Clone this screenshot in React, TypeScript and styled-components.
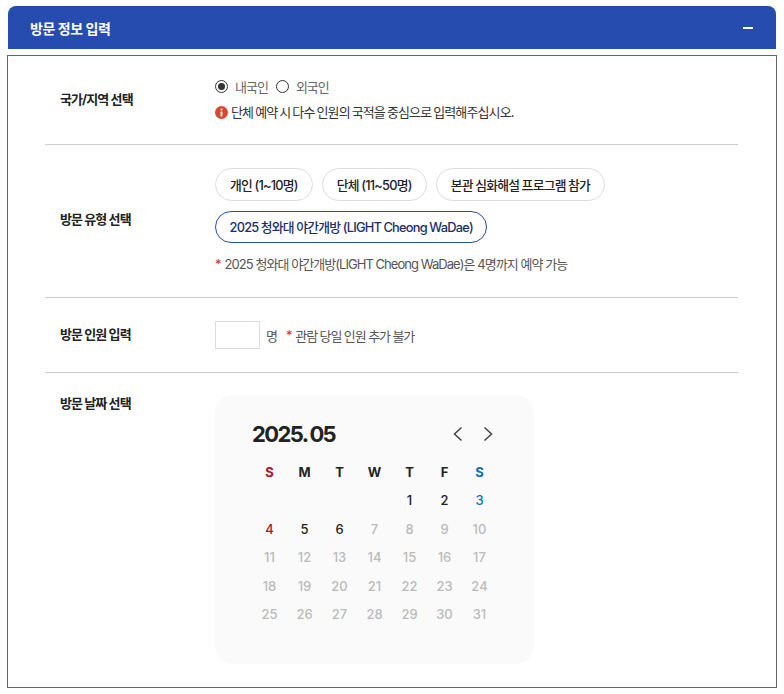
import React from "react";
import styled, { createGlobalStyle } from "styled-components";

const Global = createGlobalStyle`
  html, body { margin: 0; padding: 0; background: #fff; }
  body { font-family: Inter, "Noto Sans CJK KR", sans-serif; color: #222; }
`;

const Page = styled.div`
  width: 784px;
  height: 694px;
  padding: 6px 7px 0;
  box-sizing: border-box;
  overflow: hidden;
`;

const Header = styled.div`
  height: 43px;
  margin: 0 1px 6px;
  background: #254cae;
  border-radius: 8px 8px 0 0;
  display: flex;
  align-items: center;
  justify-content: space-between;
  padding: 0 23px 0 22px;
  color: #fff;
  font-size: 14px;
  font-weight: 700;
  letter-spacing: -0.45px;
`;

const Minus = styled.span`
  width: 10px;
  height: 2px;
  background: #fff;
`;

const Body = styled.div`
  height: 633px;
  box-sizing: border-box;
  border: 1px solid #666;
  padding: 0 38px 0 37px;
`;

const Row = styled.div<{ $h: number; $top?: boolean; $last?: boolean }>`
  height: ${(p) => p.$h}px;
  box-sizing: border-box;
  display: grid;
  grid-template-columns: 170px 1fr;
  align-items: ${(p) => (p.$top ? "start" : "center")};
  border-bottom: ${(p) => (p.$last ? "none" : "1px solid #ccc")};
`;

const Label = styled.div<{ $top?: boolean; $lift?: boolean }>`
  padding-left: 15px;
  padding-top: ${(p) => (p.$top ? "21px" : "0")};
  padding-bottom: ${(p) => (p.$top ? "0" : p.$lift ? "4px" : "2px")};
  font-size: 13px;
  line-height: 18px;
  font-weight: 700;
  letter-spacing: -0.9px;
  color: #222;
`;

const Field = styled.div<{ $top?: boolean; $lift?: boolean }>`
  display: flex;
  flex-direction: column;
  padding-top: ${(p) => (p.$top ? "22px" : "0")};
  padding-bottom: ${(p) => (p.$lift ? "2px" : "0")};
`;

const RadioRow = styled.div`
  display: flex;
  align-items: center;
  height: 18px;
  margin-bottom: 8px;
  margin-top: -2px;
`;

const Radio = styled.span<{ $on?: boolean }>`
  width: 13px;
  height: 13px;
  box-sizing: border-box;
  border-radius: 50%;
  border: 1px solid #333;
  background: #fff;
  display: inline-flex;
  align-items: center;
  justify-content: center;
  margin-right: 7px;
  &::after {
    content: "";
    width: 7px;
    height: 7px;
    border-radius: 50%;
    background: ${(p) => (p.$on ? "#333" : "transparent")};
  }
`;

const RadioText = styled.span`
  font-size: 13px;
  letter-spacing: -1px;
  color: #666;
  margin-right: 8px;
`;

const Note = styled.div`
  display: flex;
  align-items: center;
  font-size: 13px;
  line-height: 18px;
  letter-spacing: -0.88px;
  word-spacing: -0.8px;
  color: #333;
  gap: 3px;
`;

const Chips = styled.div`
  display: flex;
  flex-wrap: wrap;
  gap: 10px 9px;
`;

const Chip = styled.button<{ $on?: boolean }>`
  height: ${(p) => (p.$on ? "32px" : "33px")};
  padding: 0 ${(p) => (p.$on ? "13.5px" : "14px")};
  background: #fff;
  border-radius: 17px;
  border: ${(p) => (p.$on ? "1.5px solid #254cae" : "1px solid #ddd")};
  font-family: inherit;
  font-size: 12.8px;
  font-weight: 500;
  letter-spacing: -0.75px;
  word-spacing: -0.3px;
  color: ${(p) => (p.$on ? "#1a2f6b" : "#222")};
  white-space: nowrap;
`;

const Hint = styled.div`
  margin-top: 12px;
  font-size: 13px;
  line-height: 18px;
  letter-spacing: -0.95px;
  color: #555;
`;

const Star = styled.span`
  color: #c9302c;
  margin-right: 4px;
`;

const InputRow = styled.div`
  display: flex;
  align-items: center;
  font-size: 13px;
  letter-spacing: -1.1px;
  color: #555;
`;

const CountBox = styled.span`
  width: 45px;
  height: 28px;
  box-sizing: border-box;
  border: 1px solid #ddd;
  margin-right: 6px;
`;

const Unit = styled.span`
  margin-right: 9px;
`;

const Calendar = styled.div`
  width: 319px;
  height: 269px;
  box-sizing: border-box;
  background: #fafafa;
  border-radius: 18px;
  padding: 25px 37px 0;
`;

const CalHead = styled.div`
  display: flex;
  align-items: center;
  justify-content: space-between;
  height: 28px;
  padding-right: 2px;
  margin-bottom: 9.6px;
`;

const Month = styled.div`
  font-size: 22px;
  font-weight: 700;
  letter-spacing: -1.6px;
  word-spacing: -1px;
  color: #222;
`;

const Arrows = styled.div`
  display: flex;
  gap: 16px;
`;

const Grid = styled.div`
  display: grid;
  grid-template-columns: repeat(7, 35px);
  grid-auto-rows: 28.5px;
`;

const Cell = styled.div<{ $c: string; $w?: number }>`
  display: flex;
  align-items: center;
  justify-content: center;
  font-size: 13px;
  font-weight: ${(p) => p.$w || 500};
  color: ${(p) => p.$c};
`;

const weekdays = ["S", "M", "T", "W", "T", "F", "S"];
const RED = "#b5121b";
const BLUE = "#0b70b8";
const DARK = "#222";
const GREY = "#bbb";

const days: (number | null)[] = [null, null, null, null, ...Array.from({ length: 31 }, (_, i) => i + 1)];

const dayColor = (d: number) => {
  if (d === 3) return BLUE;
  if (d === 4) return RED;
  if (d <= 6) return DARK;
  return GREY;
};

const Chevron = ({ left }: { left?: boolean }) => (
  <svg width="14" height="18" viewBox="0 0 14 18" fill="none">
    <path
      d={left ? "M10.5 2.5 L3.5 9 L10.5 15.5" : "M3.5 2.5 L10.5 9 L3.5 15.5"}
      stroke="#444"
      strokeWidth="1.5"
    />
  </svg>
);

const Info = () => (
  <svg width="13" height="13" viewBox="0 0 13 13">
    <circle cx="6.5" cy="6.5" r="6.5" fill="#d9472f" />
    <rect x="5.6" y="2.6" width="1.8" height="1.8" rx="0.6" fill="#fff" />
    <rect x="5.6" y="5.4" width="1.8" height="5" rx="0.6" fill="#fff" />
  </svg>
);

export default function App() {
  return (
    <Page>
      <Global />
      <Header>
        <span>방문 정보 입력</span>
        <Minus />
      </Header>
      <Body>
        <Row $h={89}>
          <Label>국가/지역 선택</Label>
          <Field>
            <RadioRow>
              <Radio $on />
              <RadioText>내국인</RadioText>
              <Radio />
              <RadioText>외국인</RadioText>
            </RadioRow>
            <Note>
              <Info />
              단체 예약 시 다수 인원의 국적을 중심으로 입력해주십시오.
            </Note>
          </Field>
        </Row>
        <Row $h={153}>
          <Label $lift>방문 유형 선택</Label>
          <Field $lift>
            <Chips>
              <Chip>개인 (1~10명)</Chip>
              <Chip>단체 (11~50명)</Chip>
              <Chip>본관 심화해설 프로그램 참가</Chip>
              <Chip $on>2025 청와대 야간개방 (LIGHT Cheong WaDae)</Chip>
            </Chips>
            <Hint>
              <Star>*</Star>2025 청와대 야간개방(LIGHT Cheong WaDae)은 4명까지 예약 가능
            </Hint>
          </Field>
        </Row>
        <Row $h={75}>
          <Label>방문 인원 입력</Label>
          <InputRow>
            <CountBox />
            <Unit>명</Unit>
            <Star>*</Star>관람 당일 인원 추가 불가
          </InputRow>
        </Row>
        <Row $h={314} $top $last>
          <Label $top>방문 날짜 선택</Label>
          <Field $top>
            <Calendar>
              <CalHead>
                <Month>2025. 05</Month>
                <Arrows>
                  <Chevron left />
                  <Chevron />
                </Arrows>
              </CalHead>
              <Grid>
                {weekdays.map((w, i) => (
                  <Cell key={i} $w={700} $c={i === 0 ? RED : i === 6 ? BLUE : DARK}>
                    {w}
                  </Cell>
                ))}
                {days.map((d, i) => (
                  <Cell key={i} $c={d ? dayColor(d) : GREY}>
                    {d}
                  </Cell>
                ))}
              </Grid>
            </Calendar>
          </Field>
        </Row>
      </Body>
    </Page>
  );
}
